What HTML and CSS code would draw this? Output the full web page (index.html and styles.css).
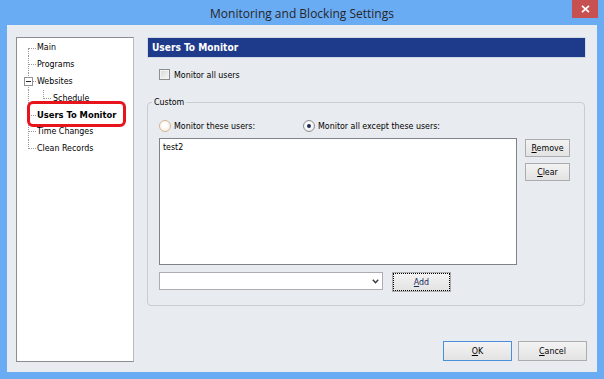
FILE: index.html
```html
<!DOCTYPE html>
<html>
<head>
<meta charset="utf-8">
<title>Monitoring and Blocking Settings</title>
<link rel="stylesheet" href="styles.css">
</head>
<body>
<div class="window">
  <div class="titlebar">
    <span class="title">Monitoring and Blocking Settings</span>
    <span class="close"><svg width="9" height="8" viewBox="0 0 9 8"><path d="M1 0.8 L8 7.2 M8 0.8 L1 7.2" stroke="#fff" stroke-width="1.7" fill="none"/></svg></span>
  </div>
  <div class="client">
    <div class="tree">
      <div class="node first">Main</div>
      <div class="node">Programs</div>
      <div class="node">Websites<span class="toggle"></span></div>
      <div class="node child"><span class="branch"></span>Schedule</div>
      <div class="node selected">Users To Monitor<span class="mark"></span></div>
      <div class="node">Time Changes</div>
      <div class="node last">Clean Records</div>
    </div>
    <div class="panel">
      <div class="panel-head">Users To Monitor</div>
      <div class="check-row"><span class="checkbox"></span><span>Monitor all users</span></div>
      <fieldset class="group">
        <legend>Custom</legend>
        <div class="radios">
          <div class="radio-label first-radio"><span class="radio hover"></span><span>Monitor these users:</span></div>
          <div class="radio-label"><span class="radio on"></span><span>Monitor all except these users:</span></div>
        </div>
        <div class="list-row">
          <div class="listbox">test2</div>
          <div class="side-buttons">
            <button class="btn small"><u>R</u>emove</button>
            <button class="btn small"><u>C</u>lear</button>
          </div>
        </div>
        <div class="add-row">
          <div class="combo"><svg width="7" height="5" viewBox="0 0 7 5"><path d="M0.8 0.8 L3.5 3.8 L6.2 0.8" stroke="#3a3a3a" stroke-width="1.4" fill="none"/></svg></div>
          <button class="btn add"><u>A</u>dd</button>
        </div>
      </fieldset>
      <div class="footer">
        <button class="btn big default"><u>O</u>K</button>
        <button class="btn big"><u>C</u>ancel</button>
      </div>
    </div>
  </div>
</div>
</body>
</html>
```
FILE: styles.css
```css
html, body {
  margin: 0;
  padding: 0;
}
body {
  font-family: "DejaVu Sans Condensed", "DejaVu Sans", sans-serif;
  font-stretch: condensed;
  font-size: 8.8px;
  color: #000;
}
.window {
  width: 604px;
  height: 379px;
  background: #6aacf4;
  display: flex;
  flex-direction: column;
}
.titlebar {
  height: 25px;
  flex: none;
  position: relative;
  display: flex;
  justify-content: center;
}
.title {
  font-family: "Open Sans", "Noto Sans", sans-serif;
  font-stretch: normal;
  font-size: 12px;
  color: #262626;
  line-height: 16px;
  padding-top: 6px;
}
.close {
  position: absolute;
  right: 6px;
  top: 0;
  width: 26px;
  height: 18px;
  background: #c75050;
  display: flex;
  align-items: center;
  justify-content: center;
}
.client {
  flex: 1;
  margin: 0 7px 7px;
  background: #e8ebef;
  display: flex;
  gap: 13px;
  padding: 12px 11px 10px 9px;
}
.tree {
  width: 118px;
  flex: none;
  box-sizing: border-box;
  background: #fff;
  border: 1px solid #8a8d93;
  border-right-color: #b9bbbe;
  padding-top: 1.5px;
}
.node {
  position: relative;
  height: 16.75px;
  display: flex;
  align-items: center;
  padding-left: 20px;
  white-space: nowrap;
  line-height: 1;
}
.node::before {
  content: "";
  position: absolute;
  left: 11px;
  top: 0;
  bottom: 0;
  border-left: 1px dotted #9a9a9a;
}
.node::after {
  content: "";
  position: absolute;
  left: 12px;
  width: 7px;
  top: 8px;
  border-top: 1px dotted #9a9a9a;
}
.node.first::before {
  top: 8px;
}
.node.last::before {
  bottom: auto;
  height: 9px;
}
.node.child {
  padding-left: 36px;
}
.node.child::after {
  display: none;
}
.branch {
  position: absolute;
  left: 26px;
  top: 0;
  width: 8px;
  height: 9px;
  box-sizing: border-box;
  border-left: 1px dotted #9a9a9a;
  border-bottom: 1px dotted #9a9a9a;
}
.toggle {
  position: absolute;
  z-index: 1;
  left: 7px;
  top: 4px;
  width: 9px;
  height: 9px;
  box-sizing: border-box;
  background: #fff;
  border: 1px solid #929292;
}
.toggle::after {
  content: "";
  position: absolute;
  left: 1px;
  top: 3px;
  width: 5px;
  height: 1px;
  background: #222;
}
.node.selected {
  font-weight: bold;
  font-size: 9.3px;
}
.mark {
  position: absolute;
  z-index: 2;
  left: 10px;
  top: -5.5px;
  width: 99px;
  height: 26px;
  box-sizing: border-box;
  border: 3px solid #e8141c;
  border-radius: 6px;
}
.panel {
  width: 439px;
  flex: none;
  display: flex;
  flex-direction: column;
}
.panel-head {
  height: 21px;
  box-sizing: border-box;
  background: #1e3a8a;
  border: 1px solid #d3d9e4;
  color: #fff;
  font-weight: bold;
  font-size: 10.1px;
  padding-left: 4px;
  display: flex;
  align-items: center;
}
.check-row {
  margin-top: 11px;
  height: 11px;
  display: flex;
  align-items: center;
  gap: 4px;
  padding-left: 12px;
}
.checkbox {
  width: 11px;
  height: 11px;
  box-sizing: border-box;
  border: 1px solid #8e8e8e;
  background: linear-gradient(135deg, #d6d6d6, #f8f8f8);
  box-shadow: inset 0 0 0 1px #f2f2f2;
}
.group {
  margin: 16px 1px 0 0;
  padding: 0 14px 13px 11px;
  border: 1px solid #c6cdd3;
  border-radius: 4px;
  min-width: 0;
}
.group legend {
  margin-left: -7px;
  padding: 0 2px;
  line-height: 12px;
}
.radios {
  margin-top: 12px;
  height: 12px;
  display: flex;
  align-items: center;
}
.radio-label {
  display: flex;
  align-items: center;
  gap: 3px;
}
.first-radio {
  width: 144px;
}
.radio {
  width: 12px;
  height: 12px;
  box-sizing: border-box;
  border-radius: 50%;
  border: 1px solid #8e8f8f;
  background: radial-gradient(circle at 45% 40%, #ffffff 20%, #e3e3e3);
  display: flex;
  align-items: center;
  justify-content: center;
}
.radio.hover {
  border-color: #d6b596;
  background: radial-gradient(circle at 45% 40%, #ffffff 25%, #f6e4d3);
}
.radio.on::after {
  content: "";
  width: 4px;
  height: 4px;
  border-radius: 50%;
  background: #1f2f4f;
}
.list-row {
  margin-top: 6px;
  display: flex;
  gap: 8px;
  align-items: flex-start;
}
.listbox {
  width: 358px;
  height: 127px;
  box-sizing: border-box;
  border: 1px solid #7f8288;
  background: #fff;
  padding: 2px 3px;
  line-height: 12px;
}
.side-buttons {
  margin-top: 1px;
  display: flex;
  flex-direction: column;
  gap: 6px;
}
.btn {
  box-sizing: border-box;
  border: 1px solid #acacac;
  background: linear-gradient(#f3f3f3, #e3e3e3);
  font-family: inherit;
  font-stretch: inherit;
  font-size: inherit;
  color: #000;
  padding: 0;
  margin: 0;
  line-height: 1;
}
.btn.small {
  width: 45px;
  height: 18px;
}
.add-row {
  margin-top: 7px;
  display: flex;
  gap: 9px;
  align-items: flex-start;
}
.combo {
  width: 224px;
  height: 18px;
  box-sizing: border-box;
  border: 1px solid #abadb3;
  background: #fff;
  display: flex;
  align-items: center;
  justify-content: flex-end;
  padding-right: 3px;
}
.btn.add {
  width: 59px;
  height: 20px;
  color: #1a2a5a;
  outline: 1px dotted #000;
  outline-offset: -2px;
}
.footer {
  margin-top: auto;
  margin-right: -1px;
  padding-bottom: 1px;
  display: flex;
  justify-content: flex-end;
  gap: 6px;
}
.btn.big {
  width: 69px;
  height: 20px;
}
.btn.default {
  border-color: #4a90d9;
}
```
